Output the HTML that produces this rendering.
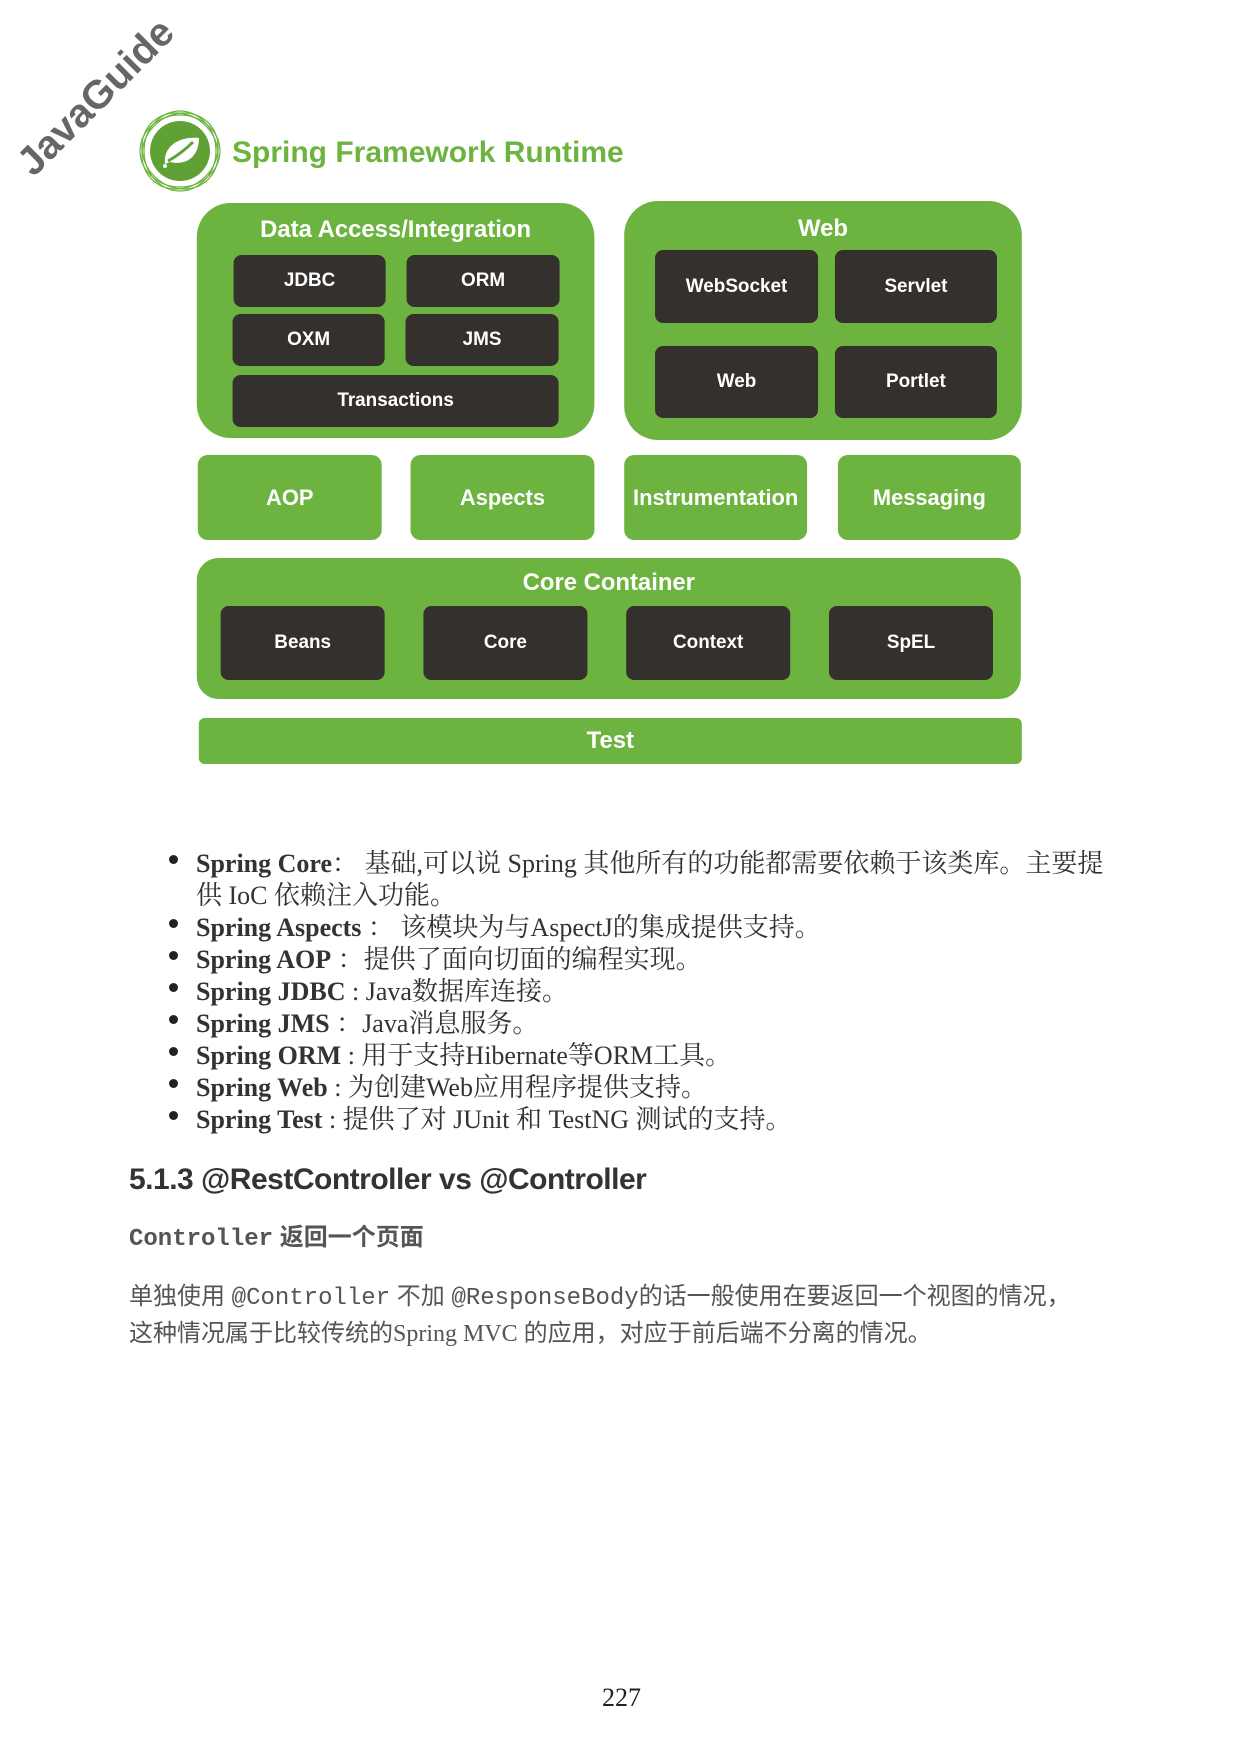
<!DOCTYPE html>
<html><head><meta charset="utf-8"><style>
body{margin:0;width:1240px;height:1754px;background:#fff;position:relative;overflow:hidden;font-family:"Liberation Sans","Noto Sans CJK SC",sans-serif}
.a{position:absolute}
.g{position:absolute;background:#6db33f;border-radius:22px}
.s{position:absolute;background:#6db33f;border-radius:10px;color:#fff;font-weight:bold;font-size:22px;display:flex;align-items:center;justify-content:center}
.d{position:absolute;background:#34302d;border-radius:8px;color:#fff;font-weight:bold;font-size:19px;display:flex;align-items:center;justify-content:center}
.t{position:absolute;color:#fff;font-weight:bold;font-size:24px;text-align:center}
.b{position:absolute;left:196px;font-family:"Liberation Serif","Noto Serif CJK SC",serif;font-size:26px;color:#333;white-space:nowrap}
.b b{color:#333}
.b:before{content:"";position:absolute;left:-27px;top:12px;width:9px;height:9px;border-radius:50%;background:#222}
.m{font-family:"Liberation Mono",monospace;color:#555}
#dg{position:absolute;left:0;top:0;width:1240px;height:800px;transform:translateX(-3px) scaleX(0.994);transform-origin:0 0}
</style></head><body>
<div class="a" style="left:-5px;top:75px;transform:rotate(-45deg);font-weight:bold;font-size:40px;color:#666;">JavaGuide</div>
<svg class="a" style="left:137px;top:108px" width="86" height="86" viewBox="0 0 86 86">
<g fill="none" stroke="#6db33f" stroke-width="1.2">
<ellipse cx="43" cy="43" rx="40" ry="36"/><ellipse cx="43" cy="43" rx="36" ry="40"/>
<ellipse cx="43" cy="43" rx="40" ry="36" transform="rotate(45 43 43)"/><ellipse cx="43" cy="43" rx="40" ry="36" transform="rotate(-45 43 43)"/></g>
<circle cx="43" cy="43" r="30" fill="#5fa134"/>
<path d="M28 56 C26 40 40 28 62 30 C62 48 50 58 33 54 Z" fill="#fff"/>
<path d="M31 53 C40 48 48 42 56 34" stroke="#5fa134" stroke-width="3" fill="none"/>
<circle cx="28" cy="58" r="2" fill="#fff"/>
</svg>
<div class="a" style="left:232px;top:136px;font-size:30px;font-weight:bold;color:#6db33f">Spring Framework Runtime</div>
<div id="dg">
<div class="g" style="left:201px;top:203px;width:400px;height:235px;border-radius:34px"></div>
<div class="t" style="left:201px;top:216px;width:400px">Data Access/Integration</div>
<div class="d" style="left:238px;top:255px;width:153px;height:52px">JDBC</div>
<div class="d" style="left:412px;top:255px;width:154px;height:52px">ORM</div>
<div class="d" style="left:237px;top:314px;width:153px;height:52px">OXM</div>
<div class="d" style="left:411px;top:314px;width:154px;height:52px">JMS</div>
<div class="d" style="left:237px;top:375px;width:328px;height:52px">Transactions</div>

<div class="g" style="left:631px;top:201px;width:400px;height:239px;border-radius:34px"></div>
<div class="t" style="left:631px;top:215px;width:400px">Web</div>
<div class="d" style="left:662px;top:250px;width:164px;height:73px">WebSocket</div>
<div class="d" style="left:843px;top:250px;width:163px;height:73px">Servlet</div>
<div class="d" style="left:662px;top:346px;width:164px;height:72px">Web</div>
<div class="d" style="left:843px;top:346px;width:163px;height:72px">Portlet</div>

<div class="s" style="left:202px;top:455px;width:185px;height:85px">AOP</div>
<div class="s" style="left:416px;top:455px;width:185px;height:85px">Aspects</div>
<div class="s" style="left:631px;top:455px;width:184px;height:85px">Instrumentation</div>
<div class="s" style="left:846px;top:455px;width:184px;height:85px">Messaging</div>

<div class="g" style="left:201px;top:558px;width:829px;height:141px"></div>
<div class="t" style="left:201px;top:569px;width:829px">Core Container</div>
<div class="d" style="left:225px;top:606px;width:165px;height:74px">Beans</div>
<div class="d" style="left:429px;top:606px;width:165px;height:74px">Core</div>
<div class="d" style="left:633px;top:606px;width:165px;height:74px">Context</div>
<div class="d" style="left:837px;top:606px;width:165px;height:74px">SpEL</div>

<div class="s" style="left:203px;top:718px;width:828px;height:46px;border-radius:6px;font-size:24px">Test</div>
</div>

<div class="b" style="top:843px"><b>Spring Core</b>：&nbsp;基础,可以说 Spring 其他所有的功能都需要依赖于该类库。主要提</div>
<div class="a" style="left:196px;top:875px;font-family:'Liberation Serif','Noto Serif CJK SC',serif;font-size:26px;color:#333">供 IoC 依赖注入功能。</div>
<div class="b" style="top:907px"><b>Spring Aspects</b> ：&nbsp;该模块为与AspectJ的集成提供支持。</div>
<div class="b" style="top:939px"><b>Spring AOP</b> ：提供了面向切面的编程实现。</div>
<div class="b" style="top:971px"><b>Spring JDBC</b> : Java数据库连接。</div>
<div class="b" style="top:1003px"><b>Spring JMS</b> ：Java消息服务。</div>
<div class="b" style="top:1035px"><b>Spring ORM</b> : 用于支持Hibernate等ORM工具。</div>
<div class="b" style="top:1067px"><b>Spring Web</b> : 为创建Web应用程序提供支持。</div>
<div class="b" style="top:1099px"><b>Spring Test</b> : 提供了对 JUnit 和 TestNG 测试的支持。</div>

<div class="a" style="left:129px;top:1163px;font-size:30px;font-weight:bold;color:#333;letter-spacing:-0.5px">5.1.3 @RestController vs @Controller</div>
<div class="a" style="left:129px;top:1217px;font-size:24px;color:#555;font-weight:bold"><span class="m">Controller</span> 返回一个页面</div>
<div class="a" style="left:129px;top:1276px;font-size:24px;color:#555;white-space:nowrap">单独使用 <span class="m">@Controller</span> 不加 <span class="m">@ResponseBody</span>的话一般使用在要返回一个视图的情况，</div>
<div class="a" style="left:129px;top:1313px;font-size:24px;color:#555;white-space:nowrap;font-family:'Liberation Serif','Noto Sans CJK SC',serif">这种情况属于比较传统的Spring MVC 的应用，对应于前后端不分离的情况。</div>
<div class="a" style="left:602px;top:1683px;font-size:26px;color:#222;font-family:'Liberation Serif',serif">227</div>
</body></html>
